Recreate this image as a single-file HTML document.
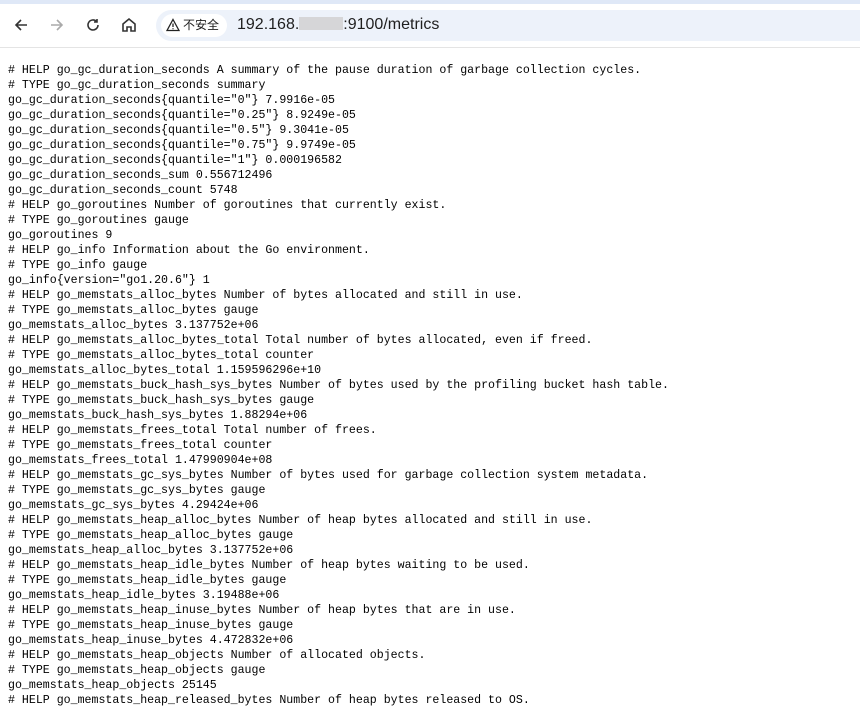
<!DOCTYPE html>
<html><head><meta charset="utf-8"><style>
body{margin:0;width:860px;height:709px;overflow:hidden;background:#fff;font-family:"Liberation Sans","Noto Sans CJK SC",sans-serif}
.top{position:absolute;left:0;top:0;width:860px;height:4px;background:#dfe8f7}
.bar{position:absolute;left:0;top:4px;width:860px;height:43px;background:#fff;border-bottom:1px solid #e4e4e4}
.url{position:absolute;left:156px;top:6px;width:720px;height:31px;border-radius:16px;background:#edf2fa}
.badge{position:absolute;left:161px;top:10px;height:23px;width:66px;border-radius:12px;background:#fff;font-size:12px;color:#1f1f1f;line-height:23px}
.u{position:absolute;left:237px;top:12px;font-size:16px;color:#1f1f1f}
.blur{display:inline-block;width:44px;height:13px;background:#d6d6d8;vertical-align:-1px}
pre{position:absolute;left:8px;top:63px;margin:0;font-family:"Liberation Mono","Noto Sans CJK SC",monospace;font-size:11.6px;line-height:15px;color:#000}
svg{position:absolute}
</style></head><body>
<div class="top"></div>
<div class="bar">
<svg style="left:12px;top:12px" width="18" height="18" viewBox="0 0 18 18"><path d="M15 9H4M9 4L4 9l5 5" fill="none" stroke="#333" stroke-width="1.6"/></svg>
<svg style="left:48px;top:12px" width="18" height="18" viewBox="0 0 18 18"><path d="M3 9h11M9 4l5 5-5 5" fill="none" stroke="#aaa" stroke-width="1.6"/></svg>
<svg style="left:84px;top:12px" width="18" height="18" viewBox="0 0 18 18"><path d="M14 9a5 5 0 1 1-1.5-3.6M13 3v3h-3" fill="none" stroke="#333" stroke-width="1.6"/></svg>
<svg style="left:120px;top:12px" width="18" height="18" viewBox="0 0 18 18"><path d="M3 8l6-5 6 5v7h-4v-4H7v4H3z" fill="none" stroke="#333" stroke-width="1.6"/></svg>
<div class="url"></div>
<div class="badge"><svg style="left:5px;top:4px" width="14" height="14" viewBox="0 0 14 14"><path d="M7 1.5L13 12.5H1z" fill="none" stroke="#222" stroke-width="1.3"/><path d="M7 5.5v3.5M7 10.2v1" stroke="#222" stroke-width="1.3"/></svg><span style="position:absolute;left:22px">不安全</span></div>
<div class="u">192.168.<span class="blur"></span>:9100/metrics</div>
</div>
<pre># HELP go_gc_duration_seconds A summary of the pause duration of garbage collection cycles.
# TYPE go_gc_duration_seconds summary
go_gc_duration_seconds{quantile="0"} 7.9916e-05
go_gc_duration_seconds{quantile="0.25"} 8.9249e-05
go_gc_duration_seconds{quantile="0.5"} 9.3041e-05
go_gc_duration_seconds{quantile="0.75"} 9.9749e-05
go_gc_duration_seconds{quantile="1"} 0.000196582
go_gc_duration_seconds_sum 0.556712496
go_gc_duration_seconds_count 5748
# HELP go_goroutines Number of goroutines that currently exist.
# TYPE go_goroutines gauge
go_goroutines 9
# HELP go_info Information about the Go environment.
# TYPE go_info gauge
go_info{version="go1.20.6"} 1
# HELP go_memstats_alloc_bytes Number of bytes allocated and still in use.
# TYPE go_memstats_alloc_bytes gauge
go_memstats_alloc_bytes 3.137752e+06
# HELP go_memstats_alloc_bytes_total Total number of bytes allocated, even if freed.
# TYPE go_memstats_alloc_bytes_total counter
go_memstats_alloc_bytes_total 1.159596296e+10
# HELP go_memstats_buck_hash_sys_bytes Number of bytes used by the profiling bucket hash table.
# TYPE go_memstats_buck_hash_sys_bytes gauge
go_memstats_buck_hash_sys_bytes 1.88294e+06
# HELP go_memstats_frees_total Total number of frees.
# TYPE go_memstats_frees_total counter
go_memstats_frees_total 1.47990904e+08
# HELP go_memstats_gc_sys_bytes Number of bytes used for garbage collection system metadata.
# TYPE go_memstats_gc_sys_bytes gauge
go_memstats_gc_sys_bytes 4.29424e+06
# HELP go_memstats_heap_alloc_bytes Number of heap bytes allocated and still in use.
# TYPE go_memstats_heap_alloc_bytes gauge
go_memstats_heap_alloc_bytes 3.137752e+06
# HELP go_memstats_heap_idle_bytes Number of heap bytes waiting to be used.
# TYPE go_memstats_heap_idle_bytes gauge
go_memstats_heap_idle_bytes 3.19488e+06
# HELP go_memstats_heap_inuse_bytes Number of heap bytes that are in use.
# TYPE go_memstats_heap_inuse_bytes gauge
go_memstats_heap_inuse_bytes 4.472832e+06
# HELP go_memstats_heap_objects Number of allocated objects.
# TYPE go_memstats_heap_objects gauge
go_memstats_heap_objects 25145
# HELP go_memstats_heap_released_bytes Number of heap bytes released to OS.</pre>
</body></html>
